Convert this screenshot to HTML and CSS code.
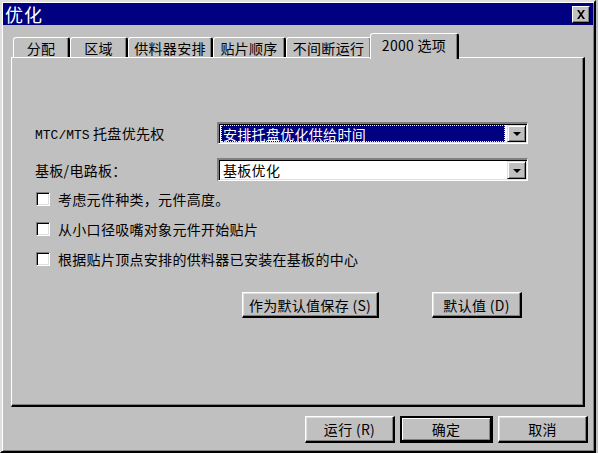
FILE: index.html
```html
<!DOCTYPE html>
<html>
<head>
<meta charset="utf-8">
<link rel="stylesheet" href="styles.css">
</head>
<body>
<div class="window">
  <div class="titlebar">
    <span class="title">优化</span>
    <span class="close">
      <svg width="10" height="9" viewBox="0 0 10 9"><path d="M1 0h2l2 3 2-3h2L6 4.5 9 9H7L5 6 3 9H1l3-4.5z" fill="#000"/></svg>
    </span>
  </div>
  <div class="client">
    <div class="tabs">
      <div class="tab w1">分配</div>
      <div class="tab w2">区域</div>
      <div class="tab w3">供料器安排</div>
      <div class="tab w4">贴片顺序</div>
      <div class="tab w5">不间断运行</div>
      <div class="tab active">2000 选项</div>
    </div>
    <div class="panel">
      <div class="formrow r1">
        <span class="label"><span class="mono">MTC/MTS</span> 托盘优先权</span>
        <div class="combo">
          <div class="field"><span class="sel">安排托盘优化供给时间</span></div>
          <div class="drop"><span class="tri"></span></div>
        </div>
      </div>
      <div class="formrow r2">
        <span class="label">基板/电路板：</span>
        <div class="combo">
          <div class="field"><span class="plain">基板优化</span></div>
          <div class="drop"><span class="tri"></span></div>
        </div>
      </div>
      <div class="checks">
        <label class="check"><span class="box"></span>考虑元件种类，元件高度。</label>
        <label class="check"><span class="box"></span>从小口径吸嘴对象元件开始贴片</label>
        <label class="check"><span class="box"></span>根据贴片顶点安排的供料器已安装在基板的中心</label>
      </div>
      <div class="panelbtns">
        <div class="btn b-save">作为默认值保存 (S)</div>
        <div class="btn b-def">默认值 (D)</div>
      </div>
    </div>
    <div class="footer">
      <div class="btn fb">运行 (R)</div>
      <div class="btn fb default">确定</div>
      <div class="btn fb">取消</div>
    </div>
  </div>
</div>
</body>
</html>
```
FILE: styles.css
```css
* { box-sizing: border-box; }
html, body { margin: 0; padding: 0; }
body {
  background: #c0c0c0;
  width: 598px;
  height: 453px;
  overflow: hidden;
  font-family: "Noto Sans CJK SC", "Noto Sans", sans-serif;
  font-size: 14px;
  letter-spacing: 0.3px;
  color: #000;
}
.window {
  width: 596px;
  height: 453px;
  background: #c0c0c0;
  border-style: solid;
  border-width: 2px;
  border-color: #dfdfdf #000 #000 #dfdfdf;
  box-shadow: inset 1px 1px 0 #fff, inset -1px -1px 0 #808080;
  padding: 1px;
  display: flex;
  flex-direction: column;
}
.titlebar {
  height: 22px;
  background: #000080;
  display: flex;
  align-items: center;
  justify-content: space-between;
  padding: 0 3px 0 2px;
  flex: none;
}
.title {
  color: #fff;
  font-size: 18px;
  letter-spacing: 1px;
  line-height: 22px;
}
.close {
  width: 18px;
  height: 17px;
  background: #c0c0c0;
  border-style: solid;
  border-width: 1px;
  border-color: #fff #000 #000 #fff;
  box-shadow: inset -1px -1px 0 #808080;
  display: flex;
  align-items: center;
  justify-content: center;
}
.client {
  flex: 1;
  padding: 8px 0 0 8px;
  display: flex;
  flex-direction: column;
}
.tabs {
  display: flex;
  align-items: flex-end;
  height: 24px;
  padding-left: 2px;
  position: relative;
  z-index: 2;
  flex: none;
}
.tab {
  height: 20px;
  border-style: solid;
  border-width: 1px 2px 0 1px;
  border-color: #fff #000 transparent #fff;
  box-shadow: inset -1px 0 0 #808080;
  border-radius: 3px 3px 0 0;
  display: flex;
  align-items: center;
  justify-content: center;
  line-height: 18px;
  background: #c0c0c0;
}
.w1 { width: 57px; }
.w2 { width: 58px; }
.w3 { width: 85px; }
.w4 { width: 73px; }
.w5 { width: 86px; }
.tab.active {
  width: 89px;
  height: 26px;
  margin: 0 -2px -2px -2px;
  padding-bottom: 4px;
  position: relative;
  z-index: 3;
}
.panel {
  width: 574px;
  height: 350px;
  border-style: solid;
  border-width: 1px 2px 2px 1px;
  border-color: #fff #000 #000 #fff;
  box-shadow: inset -1px -1px 0 #808080;
  padding: 64px 0 0 23px;
  flex: none;
}
.formrow {
  display: flex;
  align-items: center;
}
.r1 { height: 22px; }
.r2 { height: 23px; margin-top: 14px; }
.label {
  width: 182px;
  white-space: nowrap;
}
.mono {
  font-family: "Liberation Mono", monospace;
  font-size: 13px;
  letter-spacing: 0;
}
.combo {
  width: 311px;
  height: 100%;
  background: #fff;
  border-style: solid;
  border-width: 2px 1px 1px 2px;
  border-color: #808080 #fff #fff #808080;
  box-shadow: inset 1px 1px 0 #000, inset -1px -1px 0 #dfdfdf;
  display: flex;
  padding: 1px 1px 1px 1px;
}
.field {
  flex: 1;
  display: flex;
  align-items: center;
  padding: 0 2px 0 1px;
}
.sel {
  flex: 1;
  height: 100%;
  background: #000080;
  color: #fff;
  outline: 1px dotted #ffff80;
  outline-offset: -1px;
  display: flex;
  align-items: center;
  padding-left: 2px;
  line-height: 16px;
}
.plain {
  padding-left: 2px;
  line-height: 16px;
}
.drop {
  width: 19px;
  background: #c0c0c0;
  border-style: solid;
  border-width: 1px;
  border-color: #dfdfdf #000 #000 #dfdfdf;
  box-shadow: inset 1px 1px 0 #fff, inset -1px -1px 0 #808080;
  display: flex;
  align-items: center;
  justify-content: center;
}
.tri {
  width: 0;
  height: 0;
  border-left: 4px solid transparent;
  border-right: 4px solid transparent;
  border-top: 4px solid #000;
  margin-top: 1px;
}
.checks {
  margin-top: 3px;
  display: flex;
  flex-direction: column;
}
.check {
  height: 30px;
  display: flex;
  align-items: center;
  gap: 8px;
  padding-left: 1px;
}
.box {
  width: 14px;
  height: 14px;
  background: #fff;
  border-style: solid;
  border-width: 1px;
  border-color: #808080 #fff #fff #808080;
  box-shadow: inset 1px 1px 0 #000, inset -1px -1px 0 #dfdfdf;
  flex: none;
}
.panelbtns {
  display: flex;
  margin-top: 18px;
  padding-left: 207px;
  gap: 53px;
}
.btn {
  height: 26px;
  background: #c0c0c0;
  border-style: solid;
  border-width: 1px 2px 2px 1px;
  border-color: #fff #000 #000 #fff;
  box-shadow: inset -1px -1px 0 #808080, inset 1px 1px 0 #dfdfdf;
  display: flex;
  align-items: center;
  justify-content: center;
  white-space: nowrap;
  line-height: 18px;
}
.b-save { width: 137px; }
.b-def { width: 90px; }
.footer {
  display: flex;
  justify-content: flex-end;
  gap: 5px;
  margin-top: 9px;
  padding-right: 5px;
}
.fb { width: 90px; height: 27px; }
.fb.default {
  width: 93px;
  border-width: 2px 3px 3px 2px;
  border-color: #000;
  box-shadow: inset 1px 1px 0 #fff, inset -1px -1px 0 #808080;
}
```
